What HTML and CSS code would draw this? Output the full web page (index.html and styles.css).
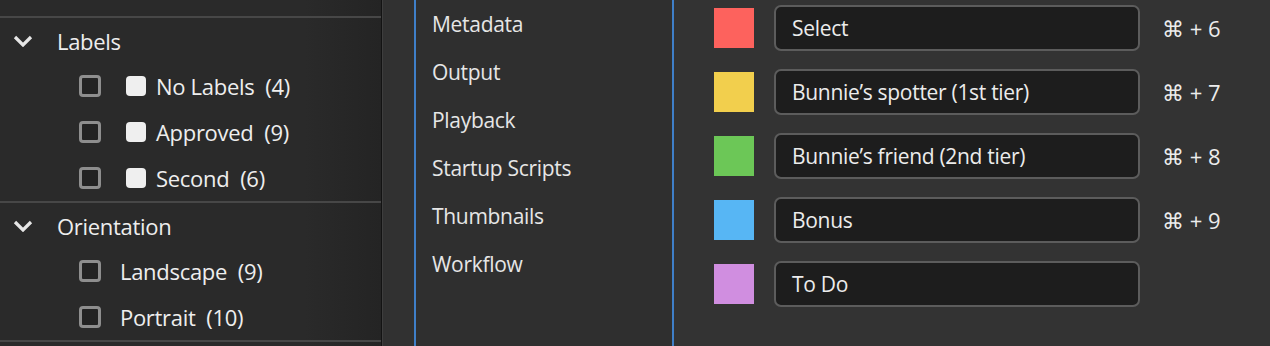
FILE: index.html
```html
<!DOCTYPE html>
<html lang="en">
<head>
  <meta charset="UTF-8">
  <title>Preferences - Labels</title>
  <link rel="stylesheet" href="styles.css">
</head>
<body>
  <aside class="filters">
    <section class="group">
      <div class="group-head">
        <svg class="chevron" width="20" height="12" viewBox="0 0 20 12"><polyline points="2,2 10,10 18,2" fill="none" stroke="#e6e6e6" stroke-width="3.2"/></svg>
        <span>Labels</span>
      </div>
      <div class="row"><span class="check"></span><span class="dot"></span><span>No Labels&nbsp; (4)</span></div>
      <div class="row"><span class="check"></span><span class="dot"></span><span>Approved&nbsp; (9)</span></div>
      <div class="row"><span class="check"></span><span class="dot"></span><span>Second&nbsp; (6)</span></div>
    </section>
    <section class="group">
      <div class="group-head">
        <svg class="chevron" width="20" height="12" viewBox="0 0 20 12"><polyline points="2,2 10,10 18,2" fill="none" stroke="#e6e6e6" stroke-width="3.2"/></svg>
        <span>Orientation</span>
      </div>
      <div class="row"><span class="check"></span><span>Landscape&nbsp; (9)</span></div>
      <div class="row"><span class="check"></span><span>Portrait&nbsp; (10)</span></div>
    </section>
    <div class="group"></div>
  </aside>

  <div class="gutter"></div>

  <nav class="nav">
    <div class="nav-item">Metadata</div>
    <div class="nav-item">Output</div>
    <div class="nav-item">Playback</div>
    <div class="nav-item">Startup Scripts</div>
    <div class="nav-item">Thumbnails</div>
    <div class="nav-item">Workflow</div>
  </nav>

  <main class="labels">
    <div class="label-row"><span class="swatch red"></span><div class="field">Select</div><span class="key">⌘ + 6</span></div>
    <div class="label-row"><span class="swatch yellow"></span><div class="field">Bunnie’s spotter (1st tier)</div><span class="key">⌘ + 7</span></div>
    <div class="label-row"><span class="swatch green"></span><div class="field">Bunnie’s friend (2nd tier)</div><span class="key">⌘ + 8</span></div>
    <div class="label-row"><span class="swatch blue"></span><div class="field">Bonus</div><span class="key">⌘ + 9</span></div>
    <div class="label-row"><span class="swatch purple"></span><div class="field">To Do</div><span class="key"></span></div>
  </main>
</body>
</html>
```

FILE: styles.css
```css
body {
  margin: 0;
  height: 346px;
  overflow: hidden;
  display: flex;
  background: #333333;
  color: #e6e6e6;
  font-family: "Open Sans", "Noto Sans", sans-serif;
  font-size: 21px;
  letter-spacing: -0.3px;
}

/* left filter panel */
.filters {
  width: 381px;
  flex-shrink: 0;
  padding-top: 16px;
  background: linear-gradient(to right, #2a2a2a 80%, #242424);
  border-right: 1px solid #131313;
  font-size: 22px;
  color: #eeeeee;
}

.group {
  border-top: 2px solid #474747;
}

.group-head {
  height: 45px;
  display: flex;
  align-items: center;
  gap: 24px;
  padding-left: 13px;
}

.row {
  height: 46px;
  display: flex;
  align-items: center;
  padding-left: 79px;
}

.check {
  width: 16px;
  height: 16px;
  border: 3px solid #8e8e8e;
  border-radius: 4px;
  background: #232323;
  margin-right: 19px;
}

.dot {
  width: 20px;
  height: 20px;
  border-radius: 4px;
  background: #efefef;
  margin-left: 6px;
  margin-right: 10px;
}

/* spacer strip */
.gutter {
  width: 31px;
  flex-shrink: 0;
  background: #313131;
  border-left: 1px solid #3e3e3e;
}

/* category list */
.nav {
  width: 256px;
  flex-shrink: 0;
  background: #2f2f2f;
  border-left: 2px solid #3f7fc8;
  border-right: 2px solid #3f7fc8;
}

.nav-item {
  height: 48px;
  line-height: 48px;
  padding-left: 16px;
}

/* label editor */
.labels {
  flex: 1;
  display: flex;
  flex-direction: column;
  gap: 8px;
  padding-left: 40px;
}

.label-row {
  height: 56px;
  display: flex;
  align-items: center;
}

.swatch {
  width: 40px;
  height: 40px;
  margin-right: 20px;
}

.red { background: #fd625d; }
.yellow { background: #f2cf4d; }
.green { background: #6cc757; }
.blue { background: #57b6f4; }
.purple { background: #d08ee0; }

.field {
  width: 346px;
  height: 42px;
  line-height: 42px;
  padding-left: 16px;
  border: 2px solid #5c5c5c;
  border-radius: 7px;
  background: #1d1d1d;
  color: #ececec;
}

.key {
  margin-left: 22px;
  color: #ececec;
  font-size: 22px;
  letter-spacing: 0;
}
```
